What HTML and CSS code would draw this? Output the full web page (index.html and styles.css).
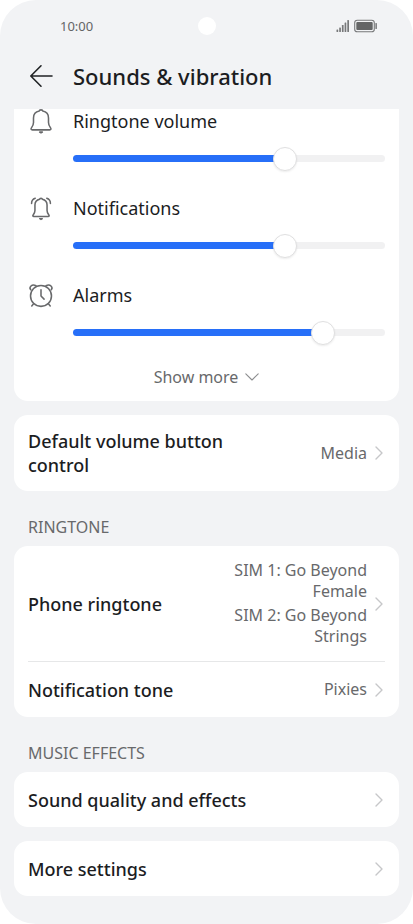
FILE: index.html
```html
<!DOCTYPE html>
<html lang="en">
<head>
<meta charset="utf-8">
<meta name="viewport" content="width=device-width, initial-scale=1">
<title>Sounds &amp; vibration</title>
<link rel="stylesheet" href="styles.css">
</head>
<body>
<div class="screen">
  <div class="status">
    <span class="time">10:00</span>
    <span class="camera"></span>
    <span class="indicators">
      <svg width="14" height="14" viewBox="0 0 14 14" fill="#77787a" aria-hidden="true">
        <rect x="0.5" y="10.5" width="1.7" height="2.5" rx=".5"/><rect x="3.2" y="8.4" width="1.7" height="4.6" rx=".5"/><rect x="5.9" y="6" width="1.7" height="7" rx=".5"/><rect x="8.6" y="3.6" width="1.7" height="9.4" rx=".5"/><rect x="11.3" y="1" width="1.7" height="12" rx=".5"/>
      </svg>
      <svg width="24" height="14" viewBox="0 0 24 14" aria-hidden="true">
        <rect x=".7" y="1.2" width="19.6" height="11.6" rx="2.6" fill="none" stroke="#77787a" stroke-width="1.1"/><rect x="2.3" y="2.9" width="16.4" height="8.2" rx="1" fill="#646566"/><rect x="21.4" y="4" width="1.5" height="6" rx=".6" fill="#77787a"/>
      </svg>
    </span>
  </div>
  <header class="header">
    <button class="back" type="button" aria-label="Back">
      <svg width="24" height="24" viewBox="0 0 24 24" fill="none" stroke="#202224" stroke-width="1.6" stroke-linecap="round" stroke-linejoin="round"><path d="M12 1.8 1.8 12 12 22.2M2 12H23"/></svg>
    </button>
    <h1>Sounds &amp; vibration</h1>
  </header>
  <main>
    <section class="card volumes">
      <div class="volume">
        <svg class="icon" width="26" height="26" viewBox="0 0 26 26" fill="none" stroke="#68696b" stroke-width="1.6" stroke-linejoin="round" stroke-linecap="round" aria-hidden="true"><path d="M11.2 2.2C11.2 .5 14.8 .5 14.8 2.2C18.6 3 20.8 5.8 20.8 9.3V14C20.8 16.4 21.6 17.8 22.8 19.4C23.8 20.8 23.4 21.7 22 21.7H4C2.6 21.7 2.2 20.8 3.2 19.4C4.4 17.8 5.2 16.4 5.2 14V9.3C5.2 5.8 7.4 3 11.2 2.2Z"/><path d="M11.6 24H14.4L13 24.8Z" fill="#68696b"/></svg>
        <label for="ringtone">Ringtone volume</label>
        <input id="ringtone" type="range" min="0" max="23" value="16" style="--level:.696">
      </div>
      <div class="volume">
        <svg class="icon" width="26" height="26" viewBox="0 0 26 26" fill="none" stroke="#68696b" stroke-width="1.6" stroke-linejoin="round" stroke-linecap="round" aria-hidden="true"><path d="M11.6 3.4C11.6 2 14.4 2 14.4 3.4C17.6 4.1 19.3 6.5 19.3 9.4V15.2C19.3 17 20 18.2 21 19.5C21.9 20.7 21.5 21.4 20.4 21.4H5.6C4.5 21.4 4.1 20.7 5 19.5C6 18.2 6.7 17 6.7 15.2V9.4C6.7 6.5 8.4 4.1 11.6 3.4Z"/><path d="M3.2 7.8C3.2 5 4.4 3.2 7 2.4M22.8 7.8C22.8 5 21.6 3.2 19 2.4"/><path d="M11.7 23.6H14.3L13 24.3Z" fill="#68696b"/></svg>
        <label for="notifications">Notifications</label>
        <input id="notifications" type="range" min="0" max="23" value="16" style="--level:.696">
      </div>
      <div class="volume">
        <svg class="icon" width="26" height="26" viewBox="0 0 26 26" fill="none" stroke="#68696b" stroke-width="1.6" stroke-linejoin="round" stroke-linecap="round" aria-hidden="true"><circle cx="13" cy="13.4" r="10.9"/><path d="M13 7V13.6L16.2 16.8M5.3 21.6 3.4 23.8M20.7 21.6 22.6 23.8M2.3 7C.2 4.6 3.4 .4 7.8 2.8M23.7 7C25.8 4.6 22.6 .4 18.2 2.8"/></svg>
        <label for="alarms">Alarms</label>
        <input id="alarms" type="range" min="0" max="23" value="19" style="--level:.826">
      </div>
      <button class="more" type="button">Show more
        <svg width="14" height="8" viewBox="0 0 14 8" fill="none" stroke="#8c8d8f" stroke-width="1.1" stroke-linecap="round" stroke-linejoin="round" aria-hidden="true"><path d="M.8 .8 7 7 13.2 .8"/></svg>
      </button>
    </section>

    <section class="card">
      <a class="row" href="#volume-button"><span class="name">Default volume button control</span><span class="value">Media</span><svg class="chevron" viewBox="0 0 8 14" aria-hidden="true"><path d="M1 1 7 7 1 13"/></svg></a>
    </section>

    <h2>RINGTONE</h2>
    <section class="card">
      <a class="row" href="#phone-ringtone"><span class="name">Phone ringtone</span><span class="value sims"><span>SIM 1: Go Beyond Female</span><span>SIM 2: Go Beyond Strings</span></span><svg class="chevron" viewBox="0 0 8 14" aria-hidden="true"><path d="M1 1 7 7 1 13"/></svg></a>
      <a class="row" href="#notification-tone"><span class="name">Notification tone</span><span class="value">Pixies</span><svg class="chevron" viewBox="0 0 8 14" aria-hidden="true"><path d="M1 1 7 7 1 13"/></svg></a>
    </section>

    <h2>MUSIC EFFECTS</h2>
    <section class="card">
      <a class="row" href="#sound-quality"><span class="name">Sound quality and effects</span><svg class="chevron" viewBox="0 0 8 14" aria-hidden="true"><path d="M1 1 7 7 1 13"/></svg></a>
    </section>
    <section class="card last">
      <a class="row" href="#more-settings"><span class="name">More settings</span><svg class="chevron" viewBox="0 0 8 14" aria-hidden="true"><path d="M1 1 7 7 1 13"/></svg></a>
    </section>
  </main>
</div>
</body>
</html>
```
FILE: styles.css
```css
* { box-sizing: border-box; }

body {
  margin: 0;
  background: #fff;
  color: #1c1d1f;
  font-family: "Noto Sans", "Open Sans", sans-serif;
  font-size: 18px;
  line-height: 24px;
}

.screen {
  min-height: 100vh;
  background: #f2f3f5;
  border-radius: 36px;
}

.status {
  display: grid;
  grid-template-columns: 1fr auto 1fr;
  align-items: center;
  height: 51px;
  padding: 0 35px;
}

.time {
  padding-left: 25px;
  color: #646566;
  font-size: 13px;
}

.camera {
  width: 18px;
  height: 18px;
  border-radius: 50%;
  background: #fff;
}

.indicators {
  display: flex;
  justify-content: flex-end;
  gap: 4px;
}

.header {
  display: flex;
  align-items: center;
  gap: 20px;
  height: 58px;
  padding: 0 29px 8px;
}

.back {
  display: flex;
  padding: 0;
  border: 0;
  background: none;
}

h1 {
  margin: 0;
  font-size: 22px;
  font-weight: 500;
  line-height: 32px;
}

main { padding: 0 14px; }

.card {
  margin-bottom: 14px;
  padding: 0 14px;
  background: #fff;
  border-radius: 14px;
}

.card.last { margin-bottom: 0; }

.volumes {
  padding-bottom: 12px;
  border-radius: 0 0 14px 14px;
}

.volume {
  display: grid;
  grid-template-columns: 26px 1fr;
  column-gap: 19px;
  row-gap: 12px;
  padding-bottom: 26px;
}

.volume:nth-of-type(3) { padding-bottom: 21px; }

.icon { height: 25px; }

.volume label { height: 25px; }

.volume input {
  grid-column: 2;
  appearance: none;
  width: 100%;
  height: 24px;
  margin: 0;
  background: none;
}

.volume input::-webkit-slider-runnable-track {
  height: 7px;
  border-radius: 4px;
  background: linear-gradient(to right, #276ff8 calc(12px + (100% - 24px) * var(--level)), #f1f1f2 0);
}

.volume input::-webkit-slider-thumb {
  appearance: none;
  width: 24px;
  height: 24px;
  margin-top: -8px;
  border: 1px solid #e0e0e1;
  border-radius: 50%;
  background: #fff;
  box-shadow: 0 1px 2px rgba(0, 0, 0, .08);
}

.more {
  display: flex;
  align-items: center;
  justify-content: center;
  gap: 7px;
  width: 100%;
  padding: 0;
  border: 0;
  background: none;
  color: #68696b;
  font: inherit;
  font-size: 16px;
}

h2 {
  margin: 0;
  padding: 10px 14px 7px;
  color: #68696b;
  font-size: 16px;
  font-weight: 400;
  line-height: 24px;
}

.row {
  display: flex;
  align-items: center;
  min-height: 55px;
  padding: 14px 2px 14px 0;
  color: inherit;
  text-decoration: none;
}

.row + .row {
  min-height: 56px;
  border-top: 1px solid #e6e7e8;
}

.name {
  max-width: 66%;
  margin-right: auto;
  font-weight: 500;
}

.value {
  color: #68696b;
  font-size: 16px;
  line-height: 21px;
  text-align: right;
}

.sims {
  display: grid;
  gap: 3px;
  width: 140px;
}

.chevron {
  flex: none;
  width: 8px;
  height: 14px;
  margin-left: 8px;
  fill: none;
  stroke: #c6c7c9;
  stroke-width: 1.4;
  stroke-linecap: round;
  stroke-linejoin: round;
}
```
